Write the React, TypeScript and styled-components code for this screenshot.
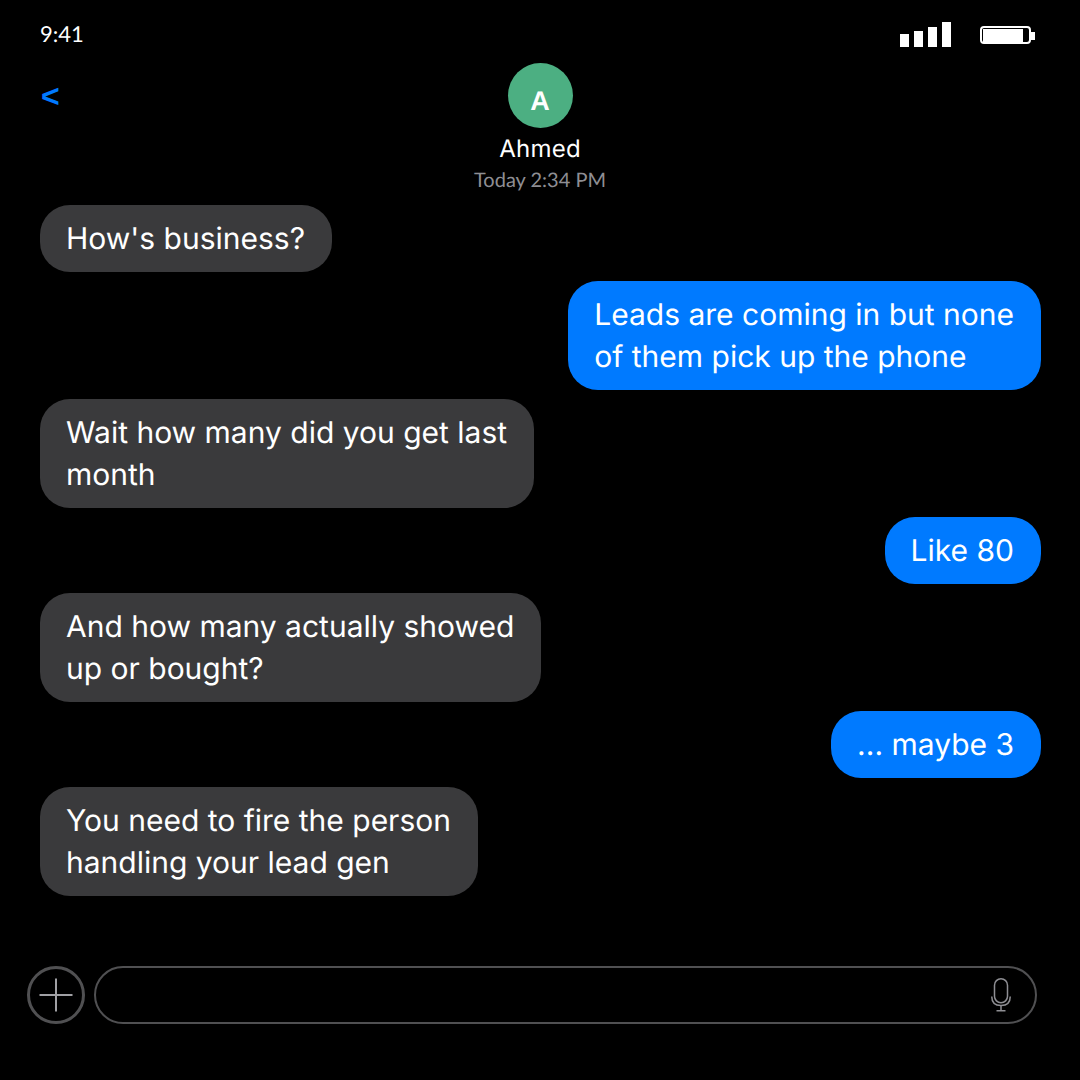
import React from "react";
import styled, { createGlobalStyle } from "styled-components";

const GlobalStyle = createGlobalStyle`
  html, body {
    margin: 0;
    padding: 0;
    background: #000;
  }
`;

const Screen = styled.div`
  width: 1080px;
  height: 1080px;
  background: #000;
  color: #fff;
  display: flex;
  flex-direction: column;
  overflow: hidden;
  font-family: "Inter", sans-serif;
  text-rendering: geometricPrecision;
`;

const StatusBar = styled.div`
  height: 63px;
  padding: 5px 45px 0 40px;
  display: flex;
  justify-content: space-between;
  align-items: center;
  flex-shrink: 0;
  box-sizing: border-box;
`;

const Clock = styled.span`
  font-family: "Lato", sans-serif;
  font-size: 22px;
  line-height: 26px;
`;

const StatusIcons = styled.div`
  display: flex;
  align-items: center;
  gap: 29px;
`;

const Header = styled.div`
  position: relative;
  display: flex;
  flex-direction: column;
  align-items: center;
  flex-shrink: 0;
`;

const BackButton = styled.span`
  position: absolute;
  left: 41px;
  top: 14px;
  font-family: "Liberation Sans", sans-serif;
  font-weight: 700;
  font-size: 32px;
  line-height: 38px;
  color: #007aff;
`;

const Avatar = styled.div`
  width: 65px;
  height: 65px;
  border-radius: 50%;
  background: #4caf82;
  display: flex;
  align-items: center;
  justify-content: center;
  font-family: "Liberation Sans", sans-serif;
  font-weight: 700;
  font-size: 27px;
  padding-top: 12px;
  box-sizing: border-box;
`;

const Name = styled.div`
  margin-top: 6px;
  font-size: 24px;
  line-height: 29px;
  font-weight: 400;
  letter-spacing: 0.24px;
`;

const Timestamp = styled.div`
  margin-top: 5px;
  font-family: "Lato", sans-serif;
  font-size: 20px;
  line-height: 24px;
  color: #8e8e93;
`;

const Messages = styled.div`
  margin-top: 13px;
  padding: 0 39px 0 40px;
  display: flex;
  flex-direction: column;
  gap: 9px;
  flex: 1;
`;

const Bubble = styled.div<{ $mine?: boolean }>`
  align-self: ${({ $mine }) => ($mine ? "flex-end" : "flex-start")};
  background: ${({ $mine }) => ($mine ? "#007aff" : "#3a3a3c")};
  padding: 13px 27px 12px 26px;
  border-radius: 30px;
  font-size: 30px;
  font-weight: 400;
  line-height: 42px;
  white-space: pre;
`;

const Composer = styled.div`
  display: flex;
  align-items: center;
  gap: 9px;
  padding: 0 43px 56px 27px;
  flex-shrink: 0;
`;

const AddButton = styled.div`
  width: 58px;
  height: 58px;
  box-sizing: border-box;
  border: 3px solid #505052;
  border-radius: 50%;
  display: flex;
  align-items: center;
  justify-content: center;
  flex-shrink: 0;
`;

const InputField = styled.div`
  flex: 1;
  height: 58px;
  box-sizing: border-box;
  border: 2px solid #505052;
  border-radius: 29px;
  display: flex;
  align-items: center;
  justify-content: flex-end;
  padding-right: 24px;
`;

const messages: { text: string; mine?: boolean }[] = [
  { text: "How's business?" },
  { text: "Leads are coming in but none\nof them pick up the phone", mine: true },
  { text: "Wait how many did you get last\nmonth" },
  { text: "Like 80", mine: true },
  { text: "And how many actually showed\nup or bought?" },
  { text: "... maybe 3", mine: true },
  { text: "You need to fire the person\nhandling your lead gen" },
];

const SignalIcon = () => (
  <svg width="51" height="25" viewBox="0 0 51 25" fill="#fff">
    <rect x="0" y="12" width="9" height="13" />
    <rect x="14" y="9" width="9" height="16" />
    <rect x="28" y="5" width="9" height="20" />
    <rect x="42" y="0" width="9" height="25" />
  </svg>
);

const BatteryIcon = () => (
  <svg width="55" height="21" viewBox="0 0 55 21">
    <rect x="1" y="3" width="49" height="16" rx="3" fill="none" stroke="#fff" strokeWidth="2" />
    <rect x="3" y="5" width="40" height="13" fill="#fff" />
    <rect x="50" y="8" width="5" height="8" fill="#fff" />
  </svg>
);

const PlusIcon = () => (
  <svg width="34" height="34" viewBox="0 0 34 34" stroke="#a0a0a4" strokeWidth="2">
    <line x1="0.5" y1="17" x2="33.5" y2="17" />
    <line x1="17" y1="0.5" x2="17" y2="33.5" />
  </svg>
);

const MicIcon = () => (
  <svg width="20" height="34" viewBox="0 0 20 34" fill="none" stroke="#8e8e93" strokeWidth="1.5">
    <rect x="3.5" y="0.75" width="13" height="24" rx="6.5" />
    <path d="M0.75 18.5 C0.75 24.5 4.5 27.5 10 27.5 C15.5 27.5 19.25 24.5 19.25 18.5" />
    <line x1="10" y1="27.5" x2="10" y2="32.5" />
    <line x1="5.5" y1="32.75" x2="14.5" y2="32.75" />
  </svg>
);

export default function App() {
  return (
    <>
      <GlobalStyle />
      <Screen>
        <StatusBar>
          <Clock>9:41</Clock>
          <StatusIcons>
            <SignalIcon />
            <BatteryIcon />
          </StatusIcons>
        </StatusBar>
        <Header>
          <BackButton>&lt;</BackButton>
          <Avatar>A</Avatar>
          <Name>Ahmed</Name>
          <Timestamp>Today 2:34 PM</Timestamp>
        </Header>
        <Messages>
          {messages.map((m, i) => (
            <Bubble key={i} $mine={m.mine}>
              {m.text}
            </Bubble>
          ))}
        </Messages>
        <Composer>
          <AddButton>
            <PlusIcon />
          </AddButton>
          <InputField>
            <MicIcon />
          </InputField>
        </Composer>
      </Screen>
    </>
  );
}
